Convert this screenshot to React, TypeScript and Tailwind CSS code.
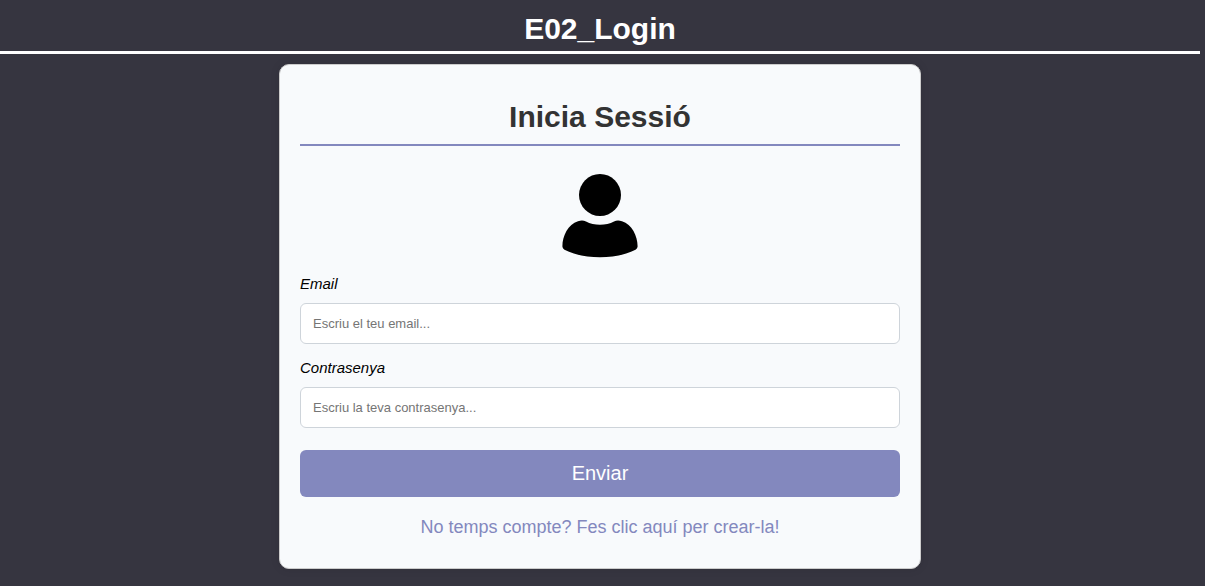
export default function App() {
  return (
    <div className="flex min-h-screen flex-col items-center bg-[#363540] pr-[5px] font-['Liberation_Sans',Arial,sans-serif]">
      <header className="w-full border-b-3 border-white pt-[11px] pb-[5px]">
        <h1 className="text-center text-[30px] leading-[35px] font-bold text-white">E02_Login</h1>
      </header>
      <main className="mt-[10px] mb-4 w-full max-w-[642px] rounded-[10px] border border-[#cccccc] bg-[#f8fafc] px-5 pt-[34px] pb-[31px] shadow-[0_0_10px_rgba(0,0,0,0.1)]">
        <h2 className="border-b-2 border-[#8388be] pb-[9px] text-center text-[30px] leading-9 font-bold text-[#333333]">Inicia Sessió</h2>
        <svg className="mx-auto mt-5 h-[100px] w-[100px]" viewBox="0 0 100 100" aria-hidden="true">
          <circle cx="50" cy="29" r="21" />
          <path d="M36 55.500C33.500 54.200 31 54.200 28 55.200C18 58.500 12.300 70 12.400 80.500Q12.400 82.500 14.500 83.700C34 93.800 66 93.800 85.500 83.700Q87.600 82.500 87.600 80.500C87.700 70 82 58.500 72 55.200C69 54.200 66.500 54.200 64 55.500C56 59.900 44 59.900 36 55.500Z" />
        </svg>
        <form onSubmit={(event) => event.preventDefault()}>
          <label htmlFor="email" className="mt-[9px] block text-[15px] leading-[18px] italic text-black">Email</label>
          <input id="email" type="email" placeholder="Escriu el teu email..." className="mt-[10px] block h-[41px] w-full rounded-[6px] border border-[#ced4da] bg-white px-3 text-[13px] text-black placeholder:text-[#757575]" />
          <label htmlFor="password" className="mt-[15px] block text-[15px] leading-[18px] italic text-black">Contrasenya</label>
          <input id="password" type="password" placeholder="Escriu la teva contrasenya..." className="mt-[10px] block h-[41px] w-full rounded-[6px] border border-[#ced4da] bg-white px-3 text-[13px] text-black placeholder:text-[#757575]" />
          <button type="submit" className="mt-[22px] block w-full rounded-[6px] bg-[#8388be] pt-3 pb-[13px] text-[20px] leading-[22px] text-white">Enviar</button>
        </form>
        <p className="mt-5 text-center text-[18px] leading-5">
          <a href="#registre" className="text-[#8388be]">No temps compte? Fes clic aquí per crear-la!</a>
        </p>
      </main>
    </div>
  );
}
